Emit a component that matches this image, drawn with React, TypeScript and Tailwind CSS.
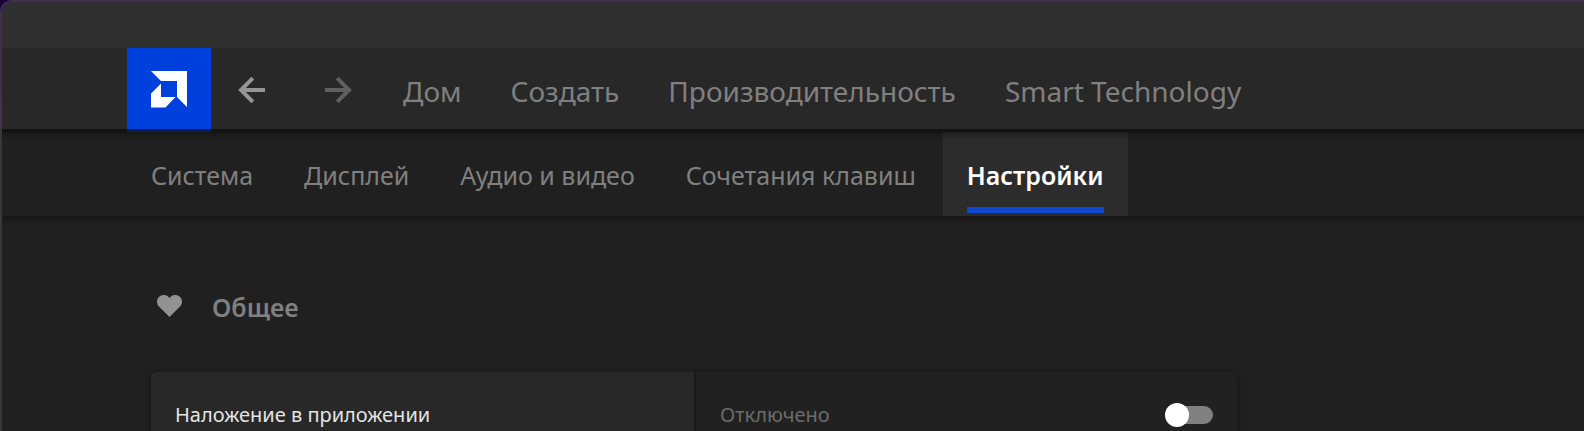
import React, { useState } from 'react';

interface NavItem {
  label: string;
  active?: boolean;
}

const mainNav: NavItem[] = [
  { label: 'Дом' },
  { label: 'Создать' },
  { label: 'Производительность' },
  { label: 'Smart Technology' },
];

const subNav: NavItem[] = [
  { label: 'Система' },
  { label: 'Дисплей' },
  { label: 'Аудио и видео' },
  { label: 'Сочетания клавиш' },
  { label: 'Настройки', active: true },
];

function Logo() {
  return (
    <a href="#home" aria-label="AMD" className="flex h-[84px] w-[84px] shrink-0 items-start justify-center bg-[#0040dd] pt-[23px]">
      <svg width="36" height="37" viewBox="0 0 36 37" fill="#fff" aria-hidden="true">
        <path d="M0 0H36V36L26 26V10H10Z" />
        <path d="M10 12.500V26H24.500L14.500 36.500H0V22.500Z" />
      </svg>
    </a>
  );
}

function Arrow({ className }: { className?: string }) {
  return (
    <svg width="28" height="26" viewBox="0 0 28 26" fill="none" stroke="currentColor" strokeWidth="4" className={className} aria-hidden="true">
      <path d="M27 13H3" />
      <path d="M14.800 1.200L3 13L14.800 24.800" />
    </svg>
  );
}

function Header() {
  return (
    <header className="relative flex h-[81px] items-start bg-[#282828] pl-[125px]">
      <Logo />
      <div className="flex h-[84px] items-center gap-[58px] pl-[27px]">
        <button type="button" aria-label="Назад" className="text-[#959595]">
          <Arrow />
        </button>
        <button type="button" aria-label="Вперёд" className="text-[#606060]">
          <Arrow className="rotate-180" />
        </button>
      </div>
      <nav className="flex h-[86px] items-center gap-[49px] pl-[51px] text-[28px] whitespace-nowrap text-[#808080]">
        {mainNav.map((item) => (
          <a key={item.label} href="#main">{item.label}</a>
        ))}
      </nav>
      {/* shade under the header, also falls over the logo */}
      <div className="absolute inset-x-0 top-full h-[3px] bg-[#141414] opacity-60" />
      <div className="absolute inset-x-0 top-full h-[3px] bg-black/20" />
      <div className="absolute inset-x-0 top-[84px] h-2 bg-linear-to-b from-black/30 to-transparent" />
    </header>
  );
}

function SubHeader() {
  return (
    <nav className="flex h-[87px] gap-[3px] bg-[#202020] pt-[3px] pl-[125px] text-[25px] whitespace-nowrap text-[#808080] shadow-[0_2px_6px_rgba(0,0,0,0.5)]">
      {subNav.map((item) => (
        <a
          key={item.label}
          href="#sub"
          className={item.active ? 'flex flex-col bg-[#2c2c2c] px-6 font-semibold text-white' : 'flex flex-col px-6'}
        >
          <span className="flex h-[75px] items-center pt-3">{item.label}</span>
          {item.active && <span className="h-[6px] bg-[#1148cf]" />}
        </a>
      ))}
    </nav>
  );
}

function OverlaySetting() {
  const [enabled, setEnabled] = useState(false);

  return (
    <div className="grid h-[85px] max-w-[1086px] grid-cols-2 rounded-md text-xl shadow-[0_1px_6px_rgba(0,0,0,0.4)]">
      <label htmlFor="overlay" className="flex items-center rounded-l-md bg-[#282828] pl-6 text-[#e4e4e4]">
        Наложение в приложении
      </label>
      <div className="flex items-center justify-between rounded-r-md border-l-2 border-[#191919] bg-[#212121] px-6 text-[#6c6c6c]">
        <span>{enabled ? 'Включено' : 'Отключено'}</span>
        <span className="relative flex h-6 w-12 items-center">
          <input
            id="overlay"
            type="checkbox"
            role="switch"
            checked={enabled}
            onChange={(e) => setEnabled(e.target.checked)}
            className="peer ml-auto h-[18px] w-11 appearance-none rounded-full bg-[#808080] checked:bg-[#0040dd]"
          />
          <span className="pointer-events-none absolute left-0 h-6 w-6 rounded-full bg-white peer-checked:left-6" />
        </span>
      </div>
    </div>
  );
}

export default function App() {
  return (
    <div className="h-screen overflow-hidden bg-[#1d0038] font-['Noto_Sans','Open_Sans',sans-serif]">
      {/* window frame */}
      <div className="h-full overflow-hidden rounded-tl-xl bg-linear-to-b from-[#3f2d52] from-0% via-[#48304f] via-29% to-[#35383c] to-30% pt-[2px] pl-[2px]">
        <div className="min-h-full overflow-hidden rounded-tl-[10px] bg-[#202020]">
          <div className="h-[46px] bg-[#303030]" />
          <Header />
          <SubHeader />
          <main className="px-[149px] pt-[74px]">
            <h2 className="flex h-9 items-center gap-[30px] pl-[6px] text-[25px] font-semibold text-[#808080]">
              <svg width="25" height="26" viewBox="0 0 25 26" fill="#929292" aria-hidden="true">
                <path d="M12.500 22L2.200 11.800C-.6 9-.7 4.600 1.900 2C4.700-.7 9.200-.7 11.600 2L12.500 3L13.400 2C15.800-.7 20.300-.7 23.100 2C25.700 4.600 25.600 9 22.800 11.800Z" />
              </svg>
              Общее
            </h2>
            <div className="pt-[46px]">
              <OverlaySetting />
            </div>
          </main>
        </div>
      </div>
    </div>
  );
}
